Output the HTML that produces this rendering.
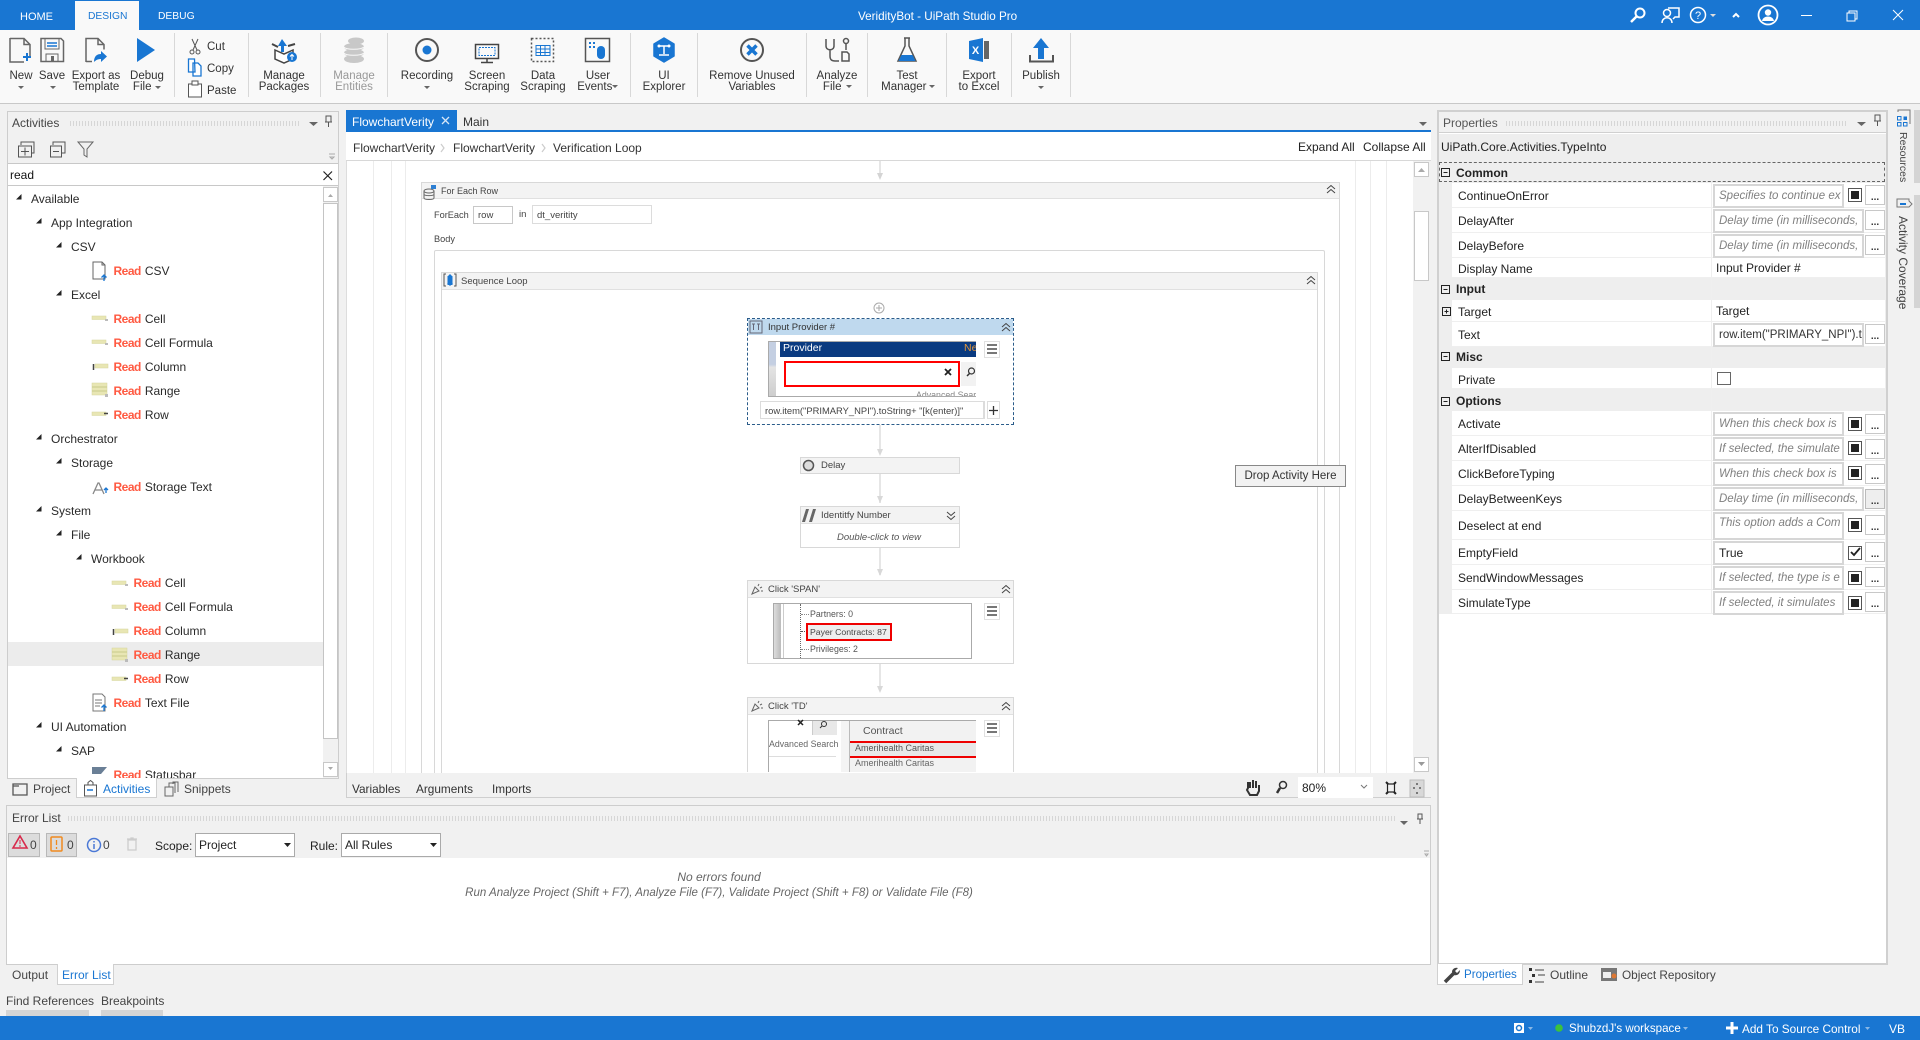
<!DOCTYPE html>
<html lang="en"><head><meta charset="utf-8"><title>VeridityBot - UiPath Studio Pro</title>
<style>
html,body{margin:0;padding:0}
body{width:1920px;height:1040px;overflow:hidden;background:#f1f1f1;position:relative;font:12px "Liberation Sans",sans-serif;color:#2a2a2a}
div{box-sizing:border-box}
.a{position:absolute}
.t{position:absolute;white-space:nowrap;line-height:16px;height:16px}
.rb{position:absolute;top:71px;text-align:center;font-size:11.5px;line-height:11px;color:#333;transform:translateX(-50%);white-space:nowrap}
.sep{position:absolute;top:33px;height:64px;width:1px;background:#d8d8d8}
.r{color:#ff5a42;font-weight:bold;letter-spacing:-.5px;margin-right:4px}
.c{font-size:9.5px;color:#444}
.p{position:absolute;left:1458px;white-space:nowrap;line-height:16px;height:16px;color:#222}
.row{position:absolute;left:1452px;width:433px;background:#fff;border-bottom:1px solid #efefef}
.sec{position:absolute;left:1456px;font-weight:bold;line-height:16px;height:16px;color:#222}
.v{position:absolute;left:1713px;height:24px;background:#fff;border:2px solid #d6d6d6;color:#808080;font-style:italic;font-size:11.5px;line-height:20px;padding-left:4px;white-space:nowrap;overflow:hidden}
.w{width:131px}.wl{width:151px}
.d{position:absolute;left:1865px;width:20px;height:20px;background:#fff;border:1px solid #c8c8c8;text-align:center;font-size:10px;line-height:24px;color:#333;font-weight:bold}
.k{position:absolute;left:1848px;width:14px;height:14px;border:1.5px solid #555;background:#fff}
.k:after{content:"";position:absolute;left:1.5px;top:1.5px;width:8px;height:8px;background:#222}
.bx{position:absolute;background:#fff;border:1px solid #d8d8d8}
.hd{position:absolute;background:#f3f3f3;border-bottom:1px solid #e0e0e0}
.vl{position:absolute;top:161px;height:612px;width:1px;background:#ececec}
.grip{position:absolute;height:5px;background-image:radial-gradient(#bcbcbc 0.6px,transparent .7px);background-size:3px 2px}
.hb{position:absolute;width:16px;height:17px;background:#fff;border:1px solid #e0e0e0}
.hb:after{content:"";position:absolute;left:2px;right:2px;top:2px;height:2px;background:#777;box-shadow:0 4px 0 #777,0 8px 0 #777}
</style></head><body>

<!-- title bar -->
<div class="a" style="left:0;top:0;width:1920px;height:30px;background:#1976d2"></div>
<div class="a" style="left:75px;top:1px;width:64px;height:29px;background:#f9f9f9"></div>
<div class="t" style="left:20px;top:8.500px;color:#fff;font-size:11px">HOME</div>
<div class="t" style="left:88px;top:9px;color:#1976d2;font-size:10.300px">DESIGN</div>
<div class="t" style="left:158px;top:9px;color:#fff;font-size:10.300px">DEBUG</div>
<div class="t" style="left:858px;top:9px;color:#fff;font-size:11.700px">VeridityBot - UiPath Studio Pro</div>

<!-- ribbon -->
<div class="a" style="left:0;top:30px;width:1920px;height:74px;background:#f9f9f9;border-bottom:1px solid #c8c8c8"></div>
<div class="sep" style="left:174px"></div><div class="sep" style="left:248px"></div><div class="sep" style="left:320px"></div><div class="sep" style="left:387px"></div><div class="sep" style="left:630px"></div><div class="sep" style="left:697px"></div><div class="sep" style="left:806px"></div><div class="sep" style="left:867px"></div><div class="sep" style="left:946px"></div><div class="sep" style="left:1011px"></div><div class="sep" style="left:1070px"></div>
<div class="rb" style="left:21px">New</div>
<div class="rb" style="left:52px">Save</div>
<div class="rb" style="left:96px">Export as<br>Template</div>
<div class="rb" style="left:147px">Debug<br>File &nbsp;&nbsp;</div>
<div class="t" style="left:207px;top:39px;font-size:11.500px;color:#333">Cut</div>
<div class="t" style="left:207px;top:61px;font-size:11.500px;color:#333">Copy</div>
<div class="t" style="left:207px;top:83px;font-size:11.500px;color:#333">Paste</div>
<div class="rb" style="left:284px">Manage<br>Packages</div>
<div class="rb" style="left:354px;color:#999">Manage<br>Entities</div>
<div class="rb" style="left:427px">Recording</div>
<div class="rb" style="left:487px">Screen<br>Scraping</div>
<div class="rb" style="left:543px">Data<br>Scraping</div>
<div class="rb" style="left:598px">User<br>Events &nbsp;</div>
<div class="rb" style="left:664px">UI<br>Explorer</div>
<div class="rb" style="left:752px">Remove Unused<br>Variables</div>
<div class="rb" style="left:837px">Analyze<br>File &nbsp;&nbsp;</div>
<div class="rb" style="left:907px">Test<br>Manager &nbsp;</div>
<div class="rb" style="left:979px">Export<br>to Excel</div>
<div class="rb" style="left:1041px">Publish</div>

<!-- activities panel -->
<div class="a" style="left:7px;top:111px;width:332px;height:668px;border:1px solid #cdcdcd;background:#f1f1f1"></div>
<div class="t" style="left:12px;top:115px;color:#444">Activities</div>
<div class="grip" style="left:69px;top:121px;width:231px"></div>
<div class="a" style="left:8px;top:163px;width:330px;height:23px;background:#fff;border-top:1px solid #c8c8c8;border-bottom:1px solid #c8c8c8"></div>
<div class="t" style="left:10px;top:167px;color:#111">read</div>
<div class="a" style="left:8px;top:186px;width:315px;height:592px;background:#fff"></div>
<div class="a" style="left:8px;top:642px;width:315px;height:24px;background:#ececec"></div>
<div class="a" style="left:323px;top:187px;width:15px;height:15px;background:#fff;border:1px solid #c8c8c8"></div>
<div class="a" style="left:323px;top:203px;width:15px;height:536px;background:#fff;border:1px solid #c4c4c4"></div>
<div class="a" style="left:323px;top:762px;width:15px;height:15px;background:#fff;border:1px solid #c8c8c8"></div>
<div class="a" style="left:8px;top:186px;width:315px;height:592px;overflow:hidden">
<div class="t" style="left:23px;top:5px">Available</div>
<div class="t" style="left:43px;top:29px">App Integration</div>
<div class="t" style="left:63px;top:53px">CSV</div>
<div class="t" style="left:105.500px;top:77px"><span class="r">Read</span>CSV</div>
<div class="t" style="left:63px;top:101px">Excel</div>
<div class="t" style="left:105.500px;top:125px"><span class="r">Read</span>Cell</div>
<div class="t" style="left:105.500px;top:149px"><span class="r">Read</span>Cell Formula</div>
<div class="t" style="left:105.500px;top:173px"><span class="r">Read</span>Column</div>
<div class="t" style="left:105.500px;top:197px"><span class="r">Read</span>Range</div>
<div class="t" style="left:105.500px;top:221px"><span class="r">Read</span>Row</div>
<div class="t" style="left:43px;top:245px">Orchestrator</div>
<div class="t" style="left:63px;top:269px">Storage</div>
<div class="t" style="left:105.500px;top:293px"><span class="r">Read</span>Storage Text</div>
<div class="t" style="left:43px;top:317px">System</div>
<div class="t" style="left:63px;top:341px">File</div>
<div class="t" style="left:83px;top:365px">Workbook</div>
<div class="t" style="left:125.500px;top:389px"><span class="r">Read</span>Cell</div>
<div class="t" style="left:125.500px;top:413px"><span class="r">Read</span>Cell Formula</div>
<div class="t" style="left:125.500px;top:437px"><span class="r">Read</span>Column</div>
<div class="t" style="left:125.500px;top:461px"><span class="r">Read</span>Range</div>
<div class="t" style="left:125.500px;top:485px"><span class="r">Read</span>Row</div>
<div class="t" style="left:105.500px;top:509px"><span class="r">Read</span>Text File</div>
<div class="t" style="left:43px;top:533px">UI Automation</div>
<div class="t" style="left:63px;top:557px">SAP</div>
<div class="t" style="left:105.500px;top:581px"><span class="r">Read</span>Statusbar</div>
</div>
<div class="a" style="left:76px;top:778px;width:81px;height:20px;background:#fff;border:1px solid #d0d0d0;border-top:none"></div>
<div class="t" style="left:33px;top:781px;color:#444">Project</div>
<div class="t" style="left:103px;top:781px;color:#1976d2">Activities</div>
<div class="t" style="left:184px;top:781px;color:#444">Snippets</div>

<!-- center panel -->
<div class="a" style="left:346px;top:110px;width:111px;height:20px;background:#1976d2"></div>
<div class="t" style="left:352px;top:114px;color:#fff">FlowchartVerity</div>
<div class="t" style="left:463px;top:114px;color:#333">Main</div>
<div class="a" style="left:346px;top:130px;width:1085px;height:2px;background:#1976d2"></div>
<div class="a" style="left:346px;top:132px;width:1085px;height:29px;background:#fff;border-bottom:1px solid #d8d8d8"></div>
<div class="t" style="left:353px;top:139.500px;color:#333">FlowchartVerity</div>
<div class="t" style="left:453px;top:139.500px;color:#333">FlowchartVerity</div>
<div class="t" style="left:553px;top:139.500px;color:#333">Verification Loop</div>
<div class="t" style="left:1298px;top:139px;color:#222">Expand All</div>
<div class="t" style="left:1363px;top:139px;color:#222">Collapse All</div>
<div class="a" style="left:346px;top:161px;width:1067px;height:612px;background:#fff;border-left:1px solid #ddd"></div>
<div class="a" style="left:1413px;top:161px;width:18px;height:612px;background:#f1f1f1"></div>
<div class="a" style="left:1414px;top:162px;width:15px;height:15px;background:#fff;border:1px solid #c8c8c8"></div>
<div class="a" style="left:1414px;top:211px;width:15px;height:70px;background:#fff;border:1px solid #c8c8c8"></div>
<div class="a" style="left:1414px;top:757px;width:15px;height:15px;background:#fff;border:1px solid #c8c8c8"></div>
<div class="vl" style="left:373px"></div><div class="vl" style="left:391px"></div><div class="vl" style="left:405px"></div><div class="vl" style="left:1355px"></div><div class="vl" style="left:1370px"></div><div class="vl" style="left:1386px"></div>

<div class="bx" style="left:421px;top:182px;width:919px;height:591px;border-bottom:none"></div>
<div class="hd" style="left:422px;top:183px;width:917px;height:16px"></div>
<div class="t c" style="left:441px;top:183px;font-size:9px">For Each Row</div>
<div class="t c" style="left:434px;top:207px;font-size:9.200px">ForEach</div>
<div class="a c" style="left:473px;top:206px;width:40px;height:18px;border:1px solid #c8c8c8;background:#fff;line-height:18px;padding-left:4px">row</div>
<div class="t c" style="left:519px;top:207px">in</div>
<div class="a c" style="left:532px;top:205px;width:120px;height:19px;border:1px solid #dcdcdc;background:#fff;line-height:19px;padding-left:4px">dt_veritity</div>
<div class="t c" style="left:434px;top:231px;font-size:9.200px">Body</div>
<div class="bx" style="left:434px;top:250px;width:891px;height:523px;border-bottom:none;border-radius:2px 2px 0 0"></div>
<div class="bx" style="left:441px;top:272px;width:877px;height:501px;border-bottom:none"></div>
<div class="hd" style="left:442px;top:273px;width:875px;height:17px"></div>
<div class="t c" style="left:461px;top:274px">Sequence Loop</div>

<!-- connectors -->
<div class="a" style="left:879px;top:161px;width:2px;height:12px;background:#e6e6e6"></div>
<div class="a" style="left:879px;top:425px;width:2px;height:25px;background:#e6e6e6"></div>
<div class="a" style="left:879px;top:474px;width:2px;height:29px;background:#e6e6e6"></div>
<div class="a" style="left:879px;top:547px;width:2px;height:28px;background:#e6e6e6"></div>
<div class="a" style="left:879px;top:664px;width:2px;height:27px;background:#e6e6e6"></div>

<!-- input provider -->
<div class="a" style="left:747px;top:318px;width:267px;height:107px;background:#fff;border:1px dashed #2b5c8a"></div>
<div class="a" style="left:748px;top:319px;width:265px;height:16px;background:#bfd9ee"></div>
<div class="t c" style="left:768px;top:320px;color:#333">Input Provider #</div>
<div class="a" style="left:768px;top:341px;width:208px;height:56px;background:#fff;border:1px solid #aaa;border-right:none;overflow:hidden">
 <div class="a" style="left:0;top:0;width:7px;height:56px;background:linear-gradient(#c4cfe2 40%,#e4e4e4 45%,#ccc)"></div>
 <div class="a" style="left:11px;top:0;width:197px;height:15px;background:#0a3a80;color:#fff;font-size:10.500px;line-height:12px;padding-left:3px">Provider<span class="a" style="left:184px;top:0;color:#e0953b">Ne</span></div>
 <div class="a" style="left:15px;top:19px;width:176px;height:26px;border:2px solid #f00;background:#fff"></div>
 <div class="a" style="left:192px;top:20px;width:16px;height:24px;background:#f2f2f2"></div>
 <div class="t c" style="left:147px;top:45px;font-size:8.800px;color:#888">Advanced Search</div>
</div>
<div class="hb" style="left:984px;top:341px"></div>
<div class="a c" style="left:760px;top:401px;width:225px;height:18px;background:#fff;border:1px solid #dcdcdc;border-right-width:2px;line-height:18px;padding-left:4px;font-size:9.400px;white-space:nowrap;overflow:hidden">row.item("PRIMARY_NPI").toString+ "[k(enter)]"</div>
<div class="a" style="left:987px;top:401px;width:13px;height:18px;background:#fff;border:1px solid #ddd"></div>

<!-- delay -->
<div class="a" style="left:800px;top:457px;width:160px;height:17px;background:#f3f3f3;border:1px solid #d8d8d8"></div>
<div class="t c" style="left:821px;top:458px">Delay</div>
<!-- identify -->
<div class="bx" style="left:800px;top:506px;width:160px;height:42px"></div>
<div class="hd" style="left:801px;top:507px;width:158px;height:17px"></div>
<div class="t c" style="left:821px;top:508px">Identitfy Number</div>
<div class="t c" style="left:837px;top:530px;font-style:italic;color:#555">Double-click to view</div>
<!-- click span -->
<div class="bx" style="left:747px;top:580px;width:267px;height:84px"></div>
<div class="hd" style="left:748px;top:581px;width:265px;height:17px"></div>
<div class="t c" style="left:768px;top:582px">Click 'SPAN'</div>
<div class="a" style="left:773px;top:603px;width:199px;height:56px;background:#fff;border:1px solid #aaa"></div>
<div class="a" style="left:774px;top:604px;width:7px;height:54px;background:linear-gradient(90deg,#ddd,#bbb)"></div>
<div class="a" style="left:783px;top:604px;width:1px;height:54px;background:#ccc"></div>
<div class="a" style="left:800px;top:604px;height:54px;border-left:1px dotted #666"></div>
<div class="a" style="left:801px;top:614px;width:8px;border-top:1px dotted #888"></div>
<div class="a" style="left:801px;top:631px;width:8px;border-top:1px dotted #555"></div>
<div class="a" style="left:801px;top:649px;width:8px;border-top:1px dotted #888"></div>
<div class="t c" style="left:810px;top:606px;font-size:8.800px;color:#555">Partners: 0</div>
<div class="a" style="left:806px;top:623px;width:86px;height:18px;background:#eee;border:2px solid #e00"></div>
<div class="t c" style="left:810px;top:624px;font-size:8.700px;color:#444">Payer Contracts: 87</div>
<div class="t c" style="left:810px;top:641px;font-size:8.800px;color:#555">Privileges: 2</div>
<div class="hb" style="left:984px;top:603px"></div>
<!-- click td -->
<div class="bx" style="left:747px;top:697px;width:267px;height:75px;border-bottom:none"></div>
<div class="hd" style="left:748px;top:698px;width:265px;height:17px"></div>
<div class="t c" style="left:768px;top:699px">Click 'TD'</div>
<div class="a" style="left:768px;top:720px;width:208px;height:52px;background:#fff;border:1px solid #aaa;border-bottom:none;border-right:none;overflow:hidden">
 <div class="a" style="left:43px;top:0;width:25px;height:14px;background:#e8e8e8;border-left:1px solid #ccc"></div>
 <div class="a" style="left:72px;top:0;width:9px;height:52px;background:#f4f4f4"></div>
 <div class="a" style="left:80px;top:0;width:128px;height:52px;background:#f2f2f2;border-left:1px solid #bbb"></div>
 <div class="t" style="left:94px;top:2px;font-size:10.500px;color:#555">Contract</div>
 <div class="a" style="left:81px;top:20px;width:126px;height:17px;background:#e8e8e8;border-top:2px solid #e00;border-bottom:2px solid #e00"></div>
 <div class="t c" style="left:86px;top:19px;font-size:9px;color:#555">Amerihealth Caritas</div>
 <div class="t c" style="left:86px;top:34px;font-size:9px;color:#666">Amerihealth Caritas</div>
 <div class="t c" style="left:0;top:15px;font-size:8.800px;color:#666">Advanced Search</div>
 <div class="a" style="left:0;top:35px;width:67px;height:1px;background:#ddd"></div>
</div>
<div class="hb" style="left:984px;top:720px"></div>
<div class="t" style="left:1235px;top:465px;width:111px;height:22px;line-height:20px;background:#f2f2f2;border:1px solid #888;text-align:center;color:#333;font-size:11.500px">Drop Activity Here</div>

<!-- variables bar -->
<div class="a" style="left:346px;top:773px;width:1085px;height:25px;background:#f1f1f1;border-bottom:1px solid #cfcfcf;border-left:1px solid #cfcfcf"></div>
<div class="t" style="left:352px;top:781px;color:#333;font-size:11.800px">Variables</div>
<div class="t" style="left:416px;top:781px;color:#333;font-size:11.800px">Arguments</div>
<div class="t" style="left:492px;top:781px;color:#333;font-size:11.800px">Imports</div>
<div class="a" style="left:1298px;top:777px;width:75px;height:21px;background:#fff"></div>
<div class="t" style="left:1302px;top:780px;color:#222">80%</div>

<!-- error list -->
<div class="a" style="left:6px;top:805px;width:1425px;height:160px;border:1px solid #cdcdcd;background:#f1f1f1"></div>
<div class="t" style="left:12px;top:810px;color:#444">Error List</div>
<div class="grip" style="left:67px;top:816px;width:1328px"></div>
<div class="a" style="left:7px;top:858px;width:1423px;height:106px;background:#fff"></div>
<div class="a" style="left:8px;top:833px;width:32px;height:24px;background:#dcdcdc;border:1px solid #b8b8b8"></div>
<div class="a" style="left:46px;top:833px;width:31px;height:24px;background:#dcdcdc;border:1px solid #b8b8b8"></div>
<div class="t" style="left:30px;top:837px;color:#444">0</div>
<div class="t" style="left:67px;top:837px;color:#444">0</div>
<div class="t" style="left:103px;top:837px;color:#444">0</div>
<div class="t" style="left:155px;top:837.500px;color:#222">Scope:</div>
<div class="a" style="left:195px;top:833px;width:100px;height:24px;background:#fff;border:1px solid #aaa;line-height:22px;padding-left:3px;color:#222">Project</div>
<div class="t" style="left:310px;top:837.500px;color:#222">Rule:</div>
<div class="a" style="left:341px;top:833px;width:100px;height:24px;background:#fff;border:1px solid #aaa;line-height:22px;padding-left:3px;color:#222">All Rules</div>
<div class="t" style="left:0;top:869px;width:1438px;text-align:center;font-style:italic;color:#666">No errors found</div>
<div class="t" style="left:0;top:885px;width:1438px;text-align:center;font-style:italic;color:#666;font-size:11.500px">Run Analyze Project (Shift + F7), Analyze File (F7), Validate Project (Shift + F8) or Validate File (F8)</div>
<div class="a" style="left:57px;top:964px;width:57px;height:21px;background:#fff;border:1px solid #d0d0d0;border-top:none"></div>
<div class="t" style="left:12px;top:967px;color:#444">Output</div>
<div class="t" style="left:62px;top:967px;color:#1976d2">Error List</div>
<div class="t" style="left:6px;top:993px;color:#444">Find References</div>
<div class="t" style="left:101px;top:993px;color:#444">Breakpoints</div>
<div class="a" style="left:6px;top:1010px;width:83px;height:6px;background:#d5d5d5"></div>
<div class="a" style="left:101px;top:1010px;width:62px;height:6px;background:#d5d5d5"></div>

<!-- properties panel -->
<div class="a" style="left:1437px;top:110px;width:451px;height:855px;border:2px solid #d0d0d0;background:#fff"></div>
<div class="a" style="left:1439px;top:112px;width:447px;height:21px;background:#f1f1f1;border-bottom:1px solid #d0d0d0"></div>
<div class="t" style="left:1443px;top:115px;color:#555">Properties</div>
<div class="grip" style="left:1505px;top:121px;width:342px"></div>
<div class="a" style="left:1439px;top:134px;width:447px;height:480px;background:#eee"></div>
<div class="t" style="left:1441px;top:139px;color:#222">UiPath.Core.Activities.TypeInto</div>
<div class="a" style="left:1439px;top:162px;width:446px;height:20px;border:1px dashed #666"></div>
<div class="sec" style="top:165px">Common</div>
<div class="row" style="top:183px;height:25px"></div><div class="row" style="top:208px;height:25px"></div><div class="row" style="top:233px;height:25px"></div><div class="row" style="top:258px;height:20px"></div>
<div class="sec" style="top:281px">Input</div>
<div class="row" style="top:300px;height:22px"></div><div class="row" style="top:322px;height:25px"></div>
<div class="sec" style="top:349px">Misc</div>
<div class="row" style="top:368px;height:21px"></div>
<div class="sec" style="top:393px">Options</div>
<div class="row" style="top:411px;height:25px"></div><div class="row" style="top:436px;height:25px"></div><div class="row" style="top:461px;height:25px"></div><div class="row" style="top:486px;height:25px"></div><div class="row" style="top:511px;height:29px"></div><div class="row" style="top:540px;height:25px"></div><div class="row" style="top:565px;height:25px"></div><div class="row" style="top:590px;height:24px"></div>
<div class="a" style="left:1711px;top:183px;width:1px;height:431px;background:#efefef"></div>

<div class="p" style="top:188px">ContinueOnError</div><div class="v w" style="top:184px">Specifies to continue ex</div><div class="k" style="top:188px"></div><div class="d" style="top:185px">...</div>
<div class="p" style="top:213px">DelayAfter</div><div class="v wl" style="top:209px">Delay time (in milliseconds,</div><div class="d" style="top:210px">...</div>
<div class="p" style="top:238px">DelayBefore</div><div class="v wl" style="top:234px">Delay time (in milliseconds,</div><div class="d" style="top:235px">...</div>
<div class="p" style="top:261px">Display Name</div><div class="t" style="left:1716px;top:260px;color:#222">Input Provider #</div>
<div class="p" style="top:304px">Target</div><div class="t" style="left:1716px;top:303px;color:#222">Target</div>
<div class="p" style="top:327px">Text</div><div class="v wl" style="top:323px;font-style:normal;color:#333">row.item("PRIMARY_NPI").t</div><div class="d" style="top:324px">...</div>
<div class="p" style="top:372px">Private</div><div class="a" style="left:1717px;top:372px;width:14px;height:13px;border:1px solid #666;background:#fff"></div>
<div class="p" style="top:416px">Activate</div><div class="v w" style="top:412px">When this check box is</div><div class="k" style="top:417px"></div><div class="d" style="top:414px">...</div>
<div class="p" style="top:441px">AlterIfDisabled</div><div class="v w" style="top:437px">If selected, the simulate</div><div class="k" style="top:441px"></div><div class="d" style="top:439px">...</div>
<div class="p" style="top:466px">ClickBeforeTyping</div><div class="v w" style="top:462px">When this check box is</div><div class="k" style="top:466px"></div><div class="d" style="top:464px">...</div>
<div class="p" style="top:491px">DelayBetweenKeys</div><div class="v wl" style="top:487px">Delay time (in milliseconds,</div><div class="d" style="top:489px;background:#eee;border-color:#bbb">...</div>
<div class="p" style="top:518px">Deselect at end</div><div class="v w" style="top:512px;height:28px;line-height:18px">This option adds a Com</div><div class="k" style="top:518px"></div><div class="d" style="top:515px">...</div>
<div class="p" style="top:545px">EmptyField</div><div class="v w" style="top:541px;font-style:normal;font-size:12px;color:#222">True</div><div class="a" style="left:1848px;top:546px;width:14px;height:14px;border:1.500px solid #555;background:#fff"></div><div class="d" style="top:542px">...</div>
<div class="p" style="top:570px">SendWindowMessages</div><div class="v w" style="top:566px">If selected, the type is e</div><div class="k" style="top:571px"></div><div class="d" style="top:567px">...</div>
<div class="p" style="top:595px">SimulateType</div><div class="v w" style="top:591px">If selected, it simulates</div><div class="k" style="top:596px"></div><div class="d" style="top:592px">...</div>

<div class="a" style="left:1437px;top:964px;width:86px;height:21px;background:#fff;border:1px solid #d0d0d0;border-top:none"></div>
<div class="t" style="left:1464px;top:967px;color:#1976d2;font-size:11.600px">Properties</div>
<div class="t" style="left:1550px;top:967px;color:#444">Outline</div>
<div class="t" style="left:1622px;top:967px;color:#444;font-size:11.800px">Object Repository</div>

<!-- right sidebar -->
<div class="a" style="left:1914px;top:110px;width:6px;height:73px;background:#d4d4d4"></div>
<div class="a" style="left:1914px;top:195px;width:6px;height:113px;background:#d4d4d4"></div>
<div class="t" style="left:1911px;top:132px;transform-origin:0 0;transform:rotate(90deg);color:#444;font-size:10.500px">Resources</div>
<div class="t" style="left:1911px;top:216px;transform-origin:0 0;transform:rotate(90deg);color:#444">Activity Coverage</div>

<!-- status bar -->
<div class="a" style="left:0;top:1016px;width:1920px;height:24px;background:#1976d2"></div>
<div class="t" style="left:1569px;top:1021px;color:#fff;font-size:11.600px">ShubzdJ's workspace</div>
<div class="t" style="left:1742px;top:1021px;color:#fff;font-size:11.800px">Add To Source Control</div>
<div class="t" style="left:1889px;top:1021px;color:#fff">VB</div>

<!-- icons overlay -->
<svg class="a" style="left:0;top:0" width="1920" height="1040" viewBox="0 0 1920 1040" fill="none">
<!-- title bar icons -->
<g stroke="#fff" stroke-width="1.500">
<circle cx="1640" cy="13" r="4.500" stroke-width="2"/><path d="M1636.500 16.500L1631 22" stroke-width="2.500"/>
<circle cx="1667" cy="13" r="3.500"/><path d="M1662 23c0-7 10-7 10 0M1668 8h11v9h-4l-2 2"/>
<circle cx="1698" cy="15" r="7.500"/>
<path d="M1733 17l3-3 3 3" stroke-width="2"/>
<circle cx="1768" cy="15" r="9.500" stroke-width="1.800"/>
<path d="M1801 15.500h11" stroke-width="1"/><path d="M1847 13h8v8h-8zM1849 13v-2h8v8h-2" stroke-width="1"/><path d="M1893 10l10 10M1903 10l-10 10" stroke-width="1"/>
</g>
<path d="M1710 14l3 3 3-3z" fill="#ddd"/>
<circle cx="1768" cy="12.500" r="3.200" fill="#fff"/><path d="M1762 21c1-6 11-6 12 0z" fill="#fff"/>
<text x="1698" y="19" fill="#fff" font-family="Liberation Sans" font-size="11" text-anchor="middle">?</text>

<!-- ribbon icons -->
<path d="M10 38.500h14l6 6v13M30 44.500h-6v-6M10 38v24h14" stroke="#666" stroke-width="1.500"/><path d="M27 53v8M23 57h8" stroke="#1976d2" stroke-width="2"/>
<path d="M41 38.500h20l2.500 2.500v20.500h-22.500z" stroke="#666" stroke-width="1.500"/><path d="M45 39v10h14v-10" stroke="#666"/><path d="M47 43h10M47 46h10" stroke="#1976d2" stroke-width="1.500"/><path d="M46 62v-8h12v8" stroke="#666"/><rect x="51" y="56" width="3" height="5" fill="#666"/>
<path d="M86 62v-23.500h12l6 6v5M104 44.500h-6v-6M86 61.500h6" stroke="#666" stroke-width="1.500"/><path d="M94 62c0-6 3-8 7-8v-3l6 5.500-6 5.500v-3c-3 0-5 1-7 3z" fill="#1976d2"/>
<path d="M137 38l18 12-18 12z" fill="#1976d2"/>
<path d="M192 39l5 11M198 39l-5 11" stroke="#555"/><circle cx="192" cy="52" r="2" stroke="#555"/><circle cx="198" cy="52" r="2" stroke="#555"/>
<path d="M188.500 59h6l.5 13h-6.500zM193 63h5l3 3v10h-8z" stroke="#1976d2" stroke-width="1.300" fill="#fff"/>
<path d="M188.500 84h13v13h-13z" stroke="#555" fill="#fff"/><rect x="192" y="81" width="6" height="4" stroke="#555" fill="#fff"/>
<path d="M275 50l9 4 9-4v9l-9 4-9-4z" stroke="#444" stroke-width="1.500" fill="#fff"/><path d="M281 46h-3l4-7 5 7h-3v6h-3z" fill="#1976d2"/><circle cx="292" cy="57" r="5" fill="#1976d2"/><path d="M292 60v-5M290 56.500l2-2 2 2" stroke="#fff"/><path d="M272 44l6 3M288 46l7-2" stroke="#444" stroke-width="2"/>
<g fill="#c8c8c8"><ellipse cx="356" cy="41" rx="8" ry="3.500"/><ellipse cx="354" cy="47" rx="10" ry="4"/><ellipse cx="354" cy="53" rx="10" ry="4"/><ellipse cx="354" cy="59" rx="10" ry="4"/></g>
<path d="M344 47c2 3 17 3 20 0M344 53c2 3 17 3 20 0" stroke="#f9f9f9"/>
<circle cx="427" cy="50" r="11" stroke="#555" stroke-width="2"/><circle cx="427" cy="50" r="4.500" fill="#1976d2"/>
<rect x="475.500" y="44.500" width="23" height="14" stroke="#444" stroke-width="1.500"/><rect x="479" y="47.500" width="16" height="8" stroke="#1976d2" stroke-dasharray="2 1"/><path d="M487 59v3M481 62.500h12" stroke="#444" stroke-width="1.500"/>
<rect x="531.500" y="38.500" width="22" height="23" stroke="#555" stroke-width="1.500" stroke-dasharray="2 2"/><path d="M536 45.500h14v10h-14zM536 49h14M536 52.500h14M540.500 45.500v10M545 45.500v10" stroke="#1976d2"/>
<rect x="585.500" y="38.500" width="24" height="23" stroke="#555" stroke-width="1.500"/><path d="M589 42h2v2h-2zM593 42h2v2h-2zM589 46h2v2h-2zM593 46h2v2h-2z" fill="#1976d2"/><rect x="597" y="46" width="8" height="13" rx="4" fill="#1976d2"/>
<path d="M664 38l10 6v12l-10 6-10-6v-12z" fill="#1976d2" stroke="#1976d2" stroke-linejoin="round" stroke-width="1.500"/><path d="M659 46h10M664 46v8M659 55h10" stroke="#fff" stroke-width="1.500"/><circle cx="659" cy="46" r="1.500" fill="#fff"/><circle cx="669" cy="46" r="1.500" fill="#fff"/>
<circle cx="752" cy="50" r="11" stroke="#555" stroke-width="2"/><path d="M747.500 45.500l9 9M756.500 45.500l-9 9" stroke="#1976d2" stroke-width="3.500"/>
<path d="M826 39v7c0 5 8 5 8 0v-7M830 50v6c0 4 2 5 5 5h4" stroke="#555" stroke-width="1.500"/><circle cx="846" cy="41" r="2.500" stroke="#555" stroke-width="1.500"/><path d="M846 44v6M842 52h5l2 2v7h-7z" stroke="#555" stroke-width="1.500"/>
<path d="M904 38h6M905 38v8l-7 15h18l-7-15v-8" stroke="#555" stroke-width="1.500"/><path d="M901.500 55h11l3 6h-17z" fill="#1976d2"/>
<path d="M969 41l14-3v24l-14-3z" fill="#1976d2"/><rect x="984" y="41" width="5" height="18" fill="#666"/><text x="975.500" y="54" fill="#fff" font-family="Liberation Sans" font-size="11" font-weight="bold" text-anchor="middle">X</text>
<path d="M1041 38l8 10h-5v11h-6v-11h-5z" fill="#1976d2"/><path d="M1030 55v6.500h23v-6.500" stroke="#555" stroke-width="2"/>
<g fill="#666"><path d="M18 86l3 3 3-3zM50 86l3 3 3-3zM155 86l3 3 3-3zM424 86l3 3 3-3zM612 85l3 3 3-3zM846 85l3 3 3-3zM929 85l3 3 3-3zM1038 86l3 3 3-3z"/></g>

<!-- panel pins/arrows -->
<g fill="#666"><path d="M309 122l9 0-4.500 4zM1857 122l9 0-4.500 4zM1419 122l8 0-4 4zM1400 821l8 0-4 4z"/></g>
<g stroke="#555"><path d="M326 116h5v6h-5zM325 122h7M328.500 122v5M1875 115h5v6h-5zM1874 121h7M1877.500 121v5M1418 814h4v5h-4zM1417 819h6M1420 819v5" /></g>

<!-- activities toolbar -->
<rect x="18.500" y="146" width="13" height="11" stroke="#555"/><path d="M21 145v-3h13v11h-2M21 151.500h8M25 147.500v8" stroke="#555"/>
<rect x="50.500" y="146" width="11" height="11" stroke="#555"/><path d="M53 145v-3h12v11h-3M53 151.500h6" stroke="#555"/>
<path d="M78 142h15l-6 7v8l-3-2v-6z" stroke="#666"/>
<path d="M329 154h6M330 157l2 2 2-2z" stroke="#aaa"/>
<path d="M328 197l2.500-3 2.500 3z" fill="#aaa"/><path d="M328 767l2.500 3 2.500-3z" fill="#aaa"/>
<path d="M323.500 171.500l8.500 8.500M332 171.500l-8.500 8.500" stroke="#222" stroke-width="1.200"/>

<!-- tree triangles -->
<g fill="#222"><path d="M21.500 194v5.500h-5.500zM41.500 218v5.500h-5.500zM61.500 242v5.500h-5.500zM61.500 290v5.500h-5.500zM41.500 434v5.500h-5.500zM61.500 458v5.500h-5.500zM41.500 506v5.500h-5.500zM61.500 530v5.500h-5.500zM81.500 554v5.500h-5.500zM41.500 722v5.500h-5.500zM61.500 746v5.500h-5.500z"/></g>
<!-- tree leaf icons -->
<path d="M93 262h9l3 3v14h-12zM102 262v3h3" stroke="#666"/><path d="M104 281v-6M101.500 277.500l2.500-2.500 2.500 2.500" stroke="#1976d2" stroke-width="1.300"/>
<g fill="#e8e6b4" stroke="#d6d69c" stroke-width=".5"><rect x="92" y="316" width="14" height="3.500"/><rect x="92" y="340" width="14" height="3.500"/><rect x="95" y="364" width="13" height="4"/><rect x="92" y="412" width="14" height="3.500"/><rect x="112" y="581" width="14" height="3.500"/><rect x="112" y="605" width="14" height="3.500"/><rect x="115" y="629" width="13" height="4"/><rect x="112" y="677" width="14" height="3.500"/><rect x="92" y="383" width="15" height="12"/><rect x="112" y="648" width="15" height="12"/></g>
<path d="M92 387h15M92 391h15M112 652h15M112 656h15" stroke="#c9c98a"/>
<g fill="#bbb"><rect x="105" y="319" width="3" height="2"/><rect x="105" y="343" width="3" height="2"/><rect x="125" y="584" width="3" height="2"/><rect x="125" y="608" width="3" height="2"/><rect x="105" y="394" width="3" height="3"/><rect x="125" y="659" width="3" height="3"/></g>
<path d="M104 413.500h4M124 678.500h4M93.500 364v6M113.500 629v6" stroke="#444" stroke-width="1.500"/>
<path d="M93 494l5-11h1l5 11M95 490h7" stroke="#888" stroke-width="1.300"/><path d="M106 493v-5M104 490l2-2 2 2" stroke="#1976d2" stroke-width="1.300"/>
<path d="M93 694h9l3 3v14h-12zM95 700h7M95 703h7M95 706h5" stroke="#777"/><path d="M104 711v-6M101.500 707.500l2.500-2.500 2.500 2.500" stroke="#1976d2" stroke-width="1.300"/>
<path d="M92 767h15l-6 7h-9z" fill="#6a7f96"/>

<!-- bottom tab icons -->
<path d="M13 784h14v11h-14zM13 786h6" stroke="#555" stroke-width="1.300"/>
<path d="M84.500 785h12v11h-12zM88 785v-2.500l2.500-2 2.500 2v2.500" stroke="#555"/><path d="M87 790h6" stroke="#1976d2" stroke-width="1.500"/>
<path d="M165 787h8v9h-8zM169 787v-4h6v10M173 784v-2h5v10" stroke="#666"/>

<!-- canvas icons -->
<path d="M877 173l3 7 3-7z" fill="#d4d4d4"/>
<ellipse cx="429" cy="191" rx="5" ry="2" stroke="#666"/><path d="M424 191v7c0 2 10 2 10 0v-7M424 194.500c1 1.500 9 1.500 10 0" stroke="#666"/><path d="M431 185h5v4h-5z" fill="#2d7fd3"/>
<path d="M446 274h-2v12h2M454 274h2v12h-2" stroke="#555"/><path d="M450 274l3 3h-6zM450 286l3-3h-6z" fill="#1976d2"/><rect x="447.500" y="277" width="5" height="8" fill="#1976d2"/>
<path d="M1327 193l4-3.500 4 3.500M1327 189l4-3.500 4 3.500M1307 284l4-3.500 4 3.500M1307 280l4-3.500 4 3.500M1002 331l4-3.500 4 3.500M1002 327l4-3.500 4 3.500M1002 593l4-3.500 4 3.500M1002 589l4-3.500 4 3.500M1002 710l4-3.500 4 3.500M1002 706l4-3.500 4 3.500" stroke="#444"/>
<path d="M947 516l4 3.500 4-3.500M947 512l4 3.500 4-3.500" stroke="#444"/>
<circle cx="879" cy="308" r="5" stroke="#aaa"/><path d="M879 305v6M876 308h6" stroke="#aaa"/>
<rect x="750" y="321" width="12" height="12" stroke="#667"/><path d="M752 324h3M753.500 324v6M757 324h3M758.500 324v6" stroke="#667"/>
<path d="M945 369l6 6M951 369l-6 6" stroke="#222" stroke-width="1.800"/>
<circle cx="971.500" cy="371" r="3" stroke="#333" stroke-width="1.200"/><path d="M969.500 373.500l-2.500 2.500" stroke="#333" stroke-width="1.500"/>
<path d="M993.500 406v9M989 410.500h9" stroke="#333" stroke-width="1.300"/>
<circle cx="808.500" cy="465.500" r="5" stroke="#555" stroke-width="1.500" fill="#ddd"/>
<path d="M802 522l4-13h3l-4 13zM809 522l4-13h3l-4 13z" fill="#666"/>
<g stroke="#666"><path d="M752 594l3-7 4 4-7 3zM758 586l1-2M760 588l2-1M761 591h2"/><path d="M752 711l3-7 4 4-7 3zM758 703l1-2M760 705l2-1M761 708h2"/></g>
<path d="M798 720l5 5M803 720l-5 5" stroke="#222" stroke-width="1.500"/>
<circle cx="824" cy="724" r="2.500" stroke="#333"/><path d="M822 726l-2 2" stroke="#333"/>
<path d="M877 449l3 7 3-7zM877 496l3 7 3-7zM877 569l3 7 3-7zM877 686l3 7 3-7z" fill="#d8d8d8"/>
<path d="M1418 172l3.500-4 3.500 4z" fill="#aaa"/><path d="M1418 762l3.500 4 3.500-4z" fill="#999"/>

<!-- tab close -->
<path d="M442 117l7 7M449 117l-7 7" stroke="#d6e6f7" stroke-width="1.300"/>
<path d="M441 144l3 4-3 4M542 144l3 4-3 4" stroke="#ccc" stroke-width="1.200"/>

<!-- zoom bar icons -->
<path d="M1248 782v6l-1 2 3 5h7l2-4v-6M1250 782v6M1253 780v8M1256 781v7" stroke="#333" stroke-width="2"/>
<circle cx="1283" cy="785" r="3.500" stroke="#333" stroke-width="1.500"/><path d="M1280 788l-3 5" stroke="#333" stroke-width="2.500"/>
<path d="M1361 785l3 3 3-3" stroke="#777"/>
<path d="M1386 782l2 2M1396 782l-2 2M1386 794l2-2M1396 794l-2-2" stroke="#222" stroke-width="2"/><rect x="1387.500" y="784" width="7" height="8" stroke="#222" stroke-width="1.200"/>
<rect x="1410" y="780" width="14" height="17" fill="#d8d8d8" stroke="#bbb"/><path d="M1417 783v2M1417 792v2M1413 788h2M1419 788h2" stroke="#444" stroke-width="1.300"/>

<!-- error icons -->
<path d="M20 836l7 12h-14z" stroke="#d8294b" stroke-width="1.600"/><path d="M20 840v4M20 845v2" stroke="#d8294b"/>
<rect x="51" y="837" width="11" height="14" rx="1" stroke="#f08a1e" stroke-width="1.500"/><path d="M56.500 840v5M56.500 847v2" stroke="#f08a1e" stroke-width="1.300"/>
<circle cx="94" cy="845" r="6.500" stroke="#4a78d6" stroke-width="1.500"/><path d="M94 844v5M94 841v1.500" stroke="#4a78d6" stroke-width="1.500"/>
<path d="M128 840h8v10h-8zM127 839h10M131 839v-1h2v1" stroke="#ccc" stroke-width="1.300"/>
<path d="M284 843h7l-3.500 4z" fill="#222"/><path d="M430 843h7l-3.500 4z" fill="#222"/>
<path d="M1424 851h5M1425 854l1.500 2 1.500-2z" stroke="#aaa"/>

<!-- properties expanders -->
<g stroke="#222"><rect x="1441.500" y="168.500" width="8" height="8"/><path d="M1443.500 172.500h4"/><rect x="1441.500" y="285.500" width="8" height="8"/><path d="M1443.500 289.500h4"/><rect x="1442.500" y="307.500" width="8" height="8"/><path d="M1444.500 311.500h4M1446.500 309.500v4"/><rect x="1441.500" y="352.500" width="8" height="8"/><path d="M1443.500 356.500h4"/><rect x="1441.500" y="397.500" width="8" height="8"/><path d="M1443.500 401.500h4"/></g>
<path d="M1851 552l3 3 6-7" stroke="#222" stroke-width="1.800"/>

<!-- properties tabs icons -->
<path d="M1445 982l9-9" stroke="#444" stroke-width="3.500"/><path d="M1452 972c0-3 3-5 6-4l-3 3 2 2 3-3c0 4-3 6-6 5z" fill="#444"/>
<path d="M1529 968h3v3h-3zM1532 974h3v3h-3zM1529 980h3v3h-3z" fill="#333"/><path d="M1535 970h9M1538 975h7M1535 982h9" stroke="#444"/>
<rect x="1601" y="968" width="16" height="13" fill="#777"/><rect x="1603" y="972" width="8" height="6" fill="#eee"/><circle cx="1614" cy="976" r="2.500" fill="#dd7733"/>

<!-- sidebar icons -->
<path d="M1898 112v-2h12v14" stroke="#777"/><g stroke="#1976d2"><rect x="1897.500" y="116.500" width="3.500" height="3.500"/><rect x="1897.500" y="122.500" width="3.500" height="3.500"/><rect x="1903.500" y="122.500" width="3.500" height="3.500"/></g><rect x="1903.500" y="116.500" width="3.500" height="3.500" fill="#1976d2"/>
<path d="M1897 199h12v2l3 3-3 3h-12z" stroke="#777"/><path d="M1900 204h6" stroke="#1976d2" stroke-width="2"/>

<!-- status icons -->
<rect x="1514" y="1023" width="10" height="10" fill="#fff"/><circle cx="1519" cy="1028" r="2.500" stroke="#1976d2" stroke-width="1.500"/>
<circle cx="1559" cy="1028" r="3.800" fill="#3cc23c"/>
<path d="M1732 1022v12M1726 1028h12" stroke="#fff" stroke-width="3"/>
<path d="M1528 1027h5l-2.500 3zM1683 1027h5l-2.500 3zM1865 1027h5l-2.500 3z" fill="#8ab8e6"/>
</svg>
</body></html>
